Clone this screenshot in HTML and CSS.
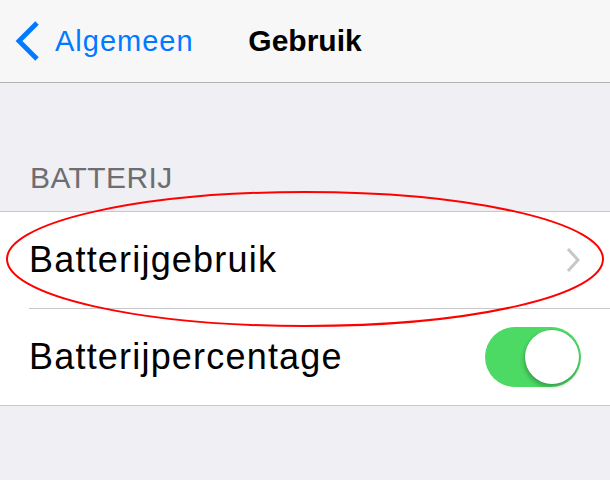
FILE: index.html
```html
<!DOCTYPE html>
<html lang="nl">
<head>
    <meta charset="UTF-8">
    <meta name="viewport" content="width=device-width, initial-scale=1.0">
    <title>Gebruik</title>
    <link rel="stylesheet" href="styles.css">
</head>
<body>
    <header class="navbar">
        <a class="back" href="#">
            <svg class="back-icon" width="26" height="40" viewBox="0 0 26 40">
                <path d="M22 2 L4 20 L22 38" fill="none" stroke="#007aff" stroke-width="4.8"/>
            </svg>
            <span>Algemeen</span>
        </a>
        <h1 class="title">Gebruik</h1>
        <div></div>
    </header>

    <main>
        <h2 class="section-header">BATTERIJ</h2>
        <ul class="group">
            <li class="cell">
                <div class="cell-content">
                    <span class="label">Batterijgebruik</span>
                    <svg class="disclosure" width="14" height="26" viewBox="0 0 14 26">
                        <path d="M2 2 L12 13 L2 24" fill="none" stroke="#c7c7cc" stroke-width="3"/>
                    </svg>
                </div>
            </li>
            <li class="cell">
                <div class="cell-content">
                    <span class="label">Batterijpercentage</span>
                    <span class="switch on"><span class="knob"></span></span>
                </div>
            </li>
        </ul>
    </main>

    <!-- red marker drawn over the first row -->
    <svg class="marker" width="610" height="480" viewBox="0 0 610 480">
        <ellipse cx="305" cy="259" rx="298" ry="67" fill="none" stroke="#f00" stroke-width="2"/>
    </svg>
</body>
</html>
```

FILE: styles.css
```css
body {
    margin: 0;
    padding: 0;
    background-color: #efeff4;
    font-family: 'Liberation Sans', Arial, sans-serif;
    color: #000;
    width: 610px;
    height: 480px;
    overflow: hidden;
    position: relative;
}

.navbar {
    height: 82px;
    background: #f7f7f7;
    border-bottom: 1px solid #b2b2b2;
    display: grid;
    grid-template-columns: 1fr auto 1fr;
    align-items: center;
}

.back {
    display: flex;
    align-items: center;
    padding-left: 15px;
    color: #007aff;
    text-decoration: none;
    font-size: 29px;
    letter-spacing: 1px;
}

.back-icon {
    margin-right: 14px;
}

.title {
    margin: 0;
    font-size: 30px;
    font-weight: bold;
    line-height: 1;
}

.section-header {
    margin: 0;
    height: 128px;
    box-sizing: border-box;
    display: flex;
    align-items: flex-end;
    padding: 0 0 16px 30px;
    font-size: 30px;
    font-weight: normal;
    letter-spacing: 0.4px;
    line-height: 34px;
    color: #6d6d72;
}

.group {
    list-style: none;
    margin: 0;
    padding: 0;
    background: #fff;
    border-top: 1px solid #c8c7cc;
    border-bottom: 1px solid #c8c7cc;
}

.cell {
    padding-left: 29px;
}

.cell-content {
    display: flex;
    align-items: center;
    justify-content: space-between;
    height: 96px;
    padding-right: 29px;
}

.cell:first-child .cell-content {
    border-bottom: 1px solid #c8c7cc;
}

.label {
    font-size: 36px;
    letter-spacing: 1.2px;
    line-height: 96px;
}

.disclosure {
    margin-right: 1px;
}

.switch {
    width: 96px;
    height: 60px;
    border-radius: 30px;
    background: #4cd964;
    display: flex;
    align-items: center;
    justify-content: flex-end;
    padding-right: 2px;
    box-sizing: border-box;
}

.knob {
    width: 54px;
    height: 54px;
    border-radius: 50%;
    background: #fff;
    box-shadow: -1px 3px 4px rgba(0, 0, 0, 0.25), 0 0 0 0.5px rgba(0, 0, 0, 0.08);
}

.marker {
    position: absolute;
    top: 0;
    left: 0;
    pointer-events: none;
}
```
